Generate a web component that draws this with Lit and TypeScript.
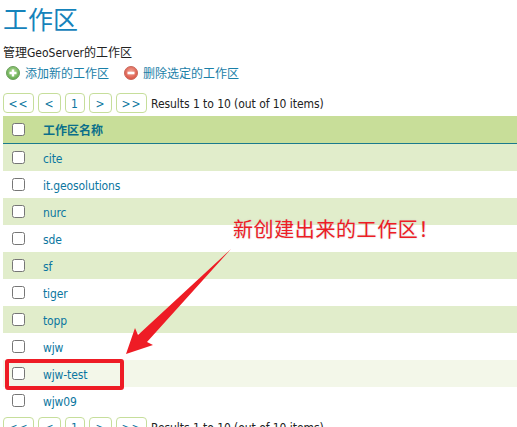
import { LitElement, html, css, svg } from "lit";
import { customElement } from "lit/decorators.js";

const ROWS = ["cite", "it.geosolutions", "nurc", "sde", "sf", "tiger", "topp", "wjw", "wjw-test", "wjw09"];
const PAGES = ["<<", "<", "1", ">", ">>"];

@customElement("app-root")
export class AppRoot extends LitElement {
  static styles = css`
    :host {
      display: block;
      position: relative;
      width: 517px;
      height: 427px;
      overflow: hidden;
      background: #fff;
      font-family: "DejaVu Sans Condensed", "Noto Sans CJK SC", sans-serif;
      font-size: 12px;
      color: #222;
    }
    h1 {
      margin: 0;
      padding: 3px 0 0 3px;
      height: 42px;
      font-weight: 400;
      font-size: 25px;
      line-height: 30px;
      color: #1583bb;
      font-family: "Noto Sans CJK SC", sans-serif;
    }
    .desc {
      margin: 0;
      padding: 0 0 0 3px;
      height: 17px;
      line-height: 17px;
      font-size: 12px;
    }
    .actions {
      display: flex;
      align-items: center;
      height: 21px;
      padding-left: 6px;
    }
    .action {
      display: flex;
      align-items: center;
      gap: 5px;
      color: #1a80a8;
      margin-right: 15px;
      font-size: 12px;
    }
    .pager {
      display: flex;
      align-items: center;
      gap: 4px;
      padding-left: 3px;
      height: 20px;
    }
    .pager-top {
      margin-top: 10px;
      margin-bottom: 3px;
    }
    .pager-bottom {
      margin-top: 3px;
    }
    .pg {
      box-sizing: border-box;
      height: 20px;
      padding-top: 2px;
      border: 1px solid #c6de9b;
      border-radius: 4px;
      display: flex;
      align-items: center;
      justify-content: center;
      color: #0b76a0;
      font-size: 12px;
      letter-spacing: 1px;
    }
    .results {
      color: #222;
      font-size: 12px;
      margin-top: 2px;
      letter-spacing: -0.06px;
    }
    .table {
      margin-left: 3px;
    }
    .head {
      display: flex;
      align-items: center;
      height: 27px;
      background: #c8de99;
      border-bottom: 1px solid #1a7a8c;
      color: #0b6f8a;
      font-weight: 700;
      font-family: "Noto Sans CJK SC", sans-serif;
      font-size: 12px;
    }
    .row {
      display: flex;
      align-items: center;
      height: 27px;
      color: #0b76a0;
    }
    .row.odd {
      background: #e1edcb;
    }
    .row.new {
      background: #f3f7e9;
    }
    .name {
      margin-top: 2px;
      letter-spacing: -0.12px;
    }
    .box {
      box-sizing: border-box;
      width: 13px;
      height: 13px;
      margin-left: 9px;
      margin-right: 18px;
      border: 1px solid #767676;
      border-radius: 2.5px;
      background: #fff;
      flex: none;
    }
    .overlay {
      position: absolute;
      left: 0;
      top: 0;
      pointer-events: none;
    }
    .note {
      position: absolute;
      left: 233px;
      top: 216px;
      font-size: 20px;
      line-height: 26px;
      letter-spacing: 0.6px;
      color: #ee1c25;
      font-family: "Noto Sans CJK SC", sans-serif;
      font-weight: 400;
      text-shadow: 0 0 2px #ccc;
      white-space: nowrap;
    }
    .mark {
      position: absolute;
      left: 5px;
      top: 359px;
      width: 119px;
      height: 31px;
      box-sizing: border-box;
      border: 4px solid #ee1c25;
      border-radius: 3px;
    }
  `;

  private addIcon() {
    return svg`<svg width="14" height="14" viewBox="0 0 14 14">
      <defs><radialGradient id="ga" cx="50%" cy="40%" r="60%"><stop offset="0" stop-color="#b5dc9a"/><stop offset="1" stop-color="#5fa84a"/></radialGradient></defs>
      <circle cx="7" cy="7" r="6.5" fill="url(#ga)" stroke="#6d9f5e"/>
      <path d="M7 3.5v7M3.5 7h7" stroke="#fff" stroke-width="2.4"/>
    </svg>`;
  }

  private removeIcon() {
    return svg`<svg width="14" height="14" viewBox="0 0 14 14">
      <defs><radialGradient id="gr" cx="50%" cy="40%" r="60%"><stop offset="0" stop-color="#f2a79a"/><stop offset="1" stop-color="#d9503f"/></radialGradient></defs>
      <circle cx="7" cy="7" r="6.5" fill="url(#gr)" stroke="#c8695c"/>
      <path d="M3.5 7h7" stroke="#fff" stroke-width="2.6"/>
    </svg>`;
  }

  private pager(cls: string) {
    const widths = [31, 23, 20, 23, 31];
    return html`<div class="pager ${cls}">
      ${PAGES.map((p, i) => html`<div class="pg" style="width:${widths[i]}px">${p}</div>`)}
      <span class="results">Results 1 to 10 (out of 10 items)</span>
    </div>`;
  }

  render() {
    return html`
      <h1>工作区</h1>
      <p class="desc">管理GeoServer的工作区</p>
      <div class="actions">
        <span class="action">${this.addIcon()}添加新的工作区</span>
        <span class="action">${this.removeIcon()}删除选定的工作区</span>
      </div>
      ${this.pager("pager-top")}
      <div class="table">
        <div class="head"><span class="box"></span>工作区名称</div>
        ${ROWS.map((r, i) => html`<div class="row ${i === 8 ? "new" : i % 2 === 0 ? "odd" : ""}"><span class="box"></span><span class="name">${r}</span></div>`)}
      </div>
      ${this.pager("pager-bottom")}
      <svg class="overlay" width="517" height="427" viewBox="0 0 517 427">
        <path d="M231 249 L138 335 L135 328 L126 354 L153 345 L147 342 Z" fill="#ee1c25"/>
      </svg>
      <div class="mark"></div>
      <div class="note">新创建出来的工作区！</div>
    `;
  }
}
